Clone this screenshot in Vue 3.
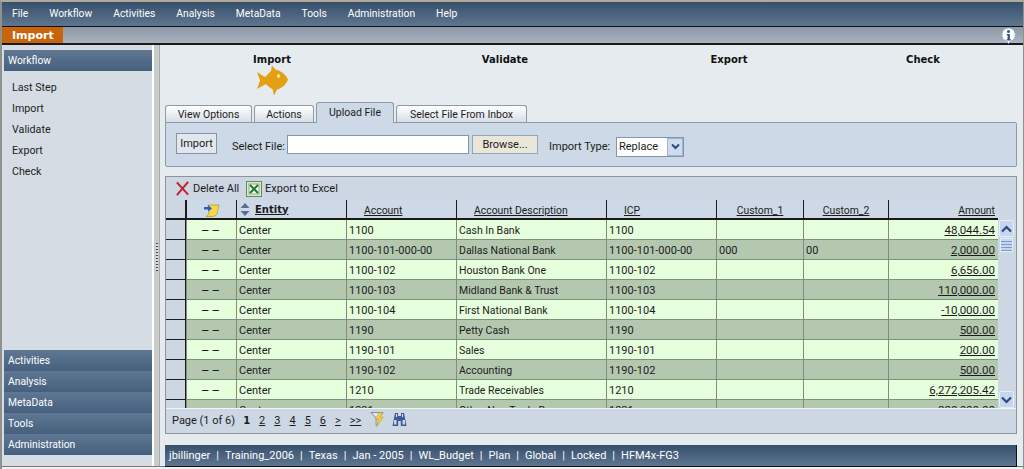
<script setup>
const menus = ['File','Workflow','Activities','Analysis','MetaData','Tools','Administration','Help']
const steps = ['Import','Validate','Export','Check']
const flowItems = ['Last Step','Import','Validate','Export','Check']
const bottomNav = ['Activities','Analysis','MetaData','Tools','Administration']
const tabs = ['View Options','Actions','Upload File','Select File From Inbox']
const headers = ['Account','Account Description','ICP','Custom_1','Custom_2']
const rows = [
  ['1100','Cash In Bank','1100','','','48,044.54'],
  ['1100-101-000-00','Dallas National Bank','1100-101-000-00','000','00','2,000.00'],
  ['1100-102','Houston Bank One','1100-102','','','6,656.00'],
  ['1100-103','Midland Bank & Trust','1100-103','','','110,000.00'],
  ['1100-104','First National Bank','1100-104','','','-10,000.00'],
  ['1190','Petty Cash','1190','','','500.00'],
  ['1190-101','Sales','1190-101','','','200.00'],
  ['1190-102','Accounting','1190-102','','','500.00'],
  ['1210','Trade Receivables','1210','','','6,272,205.42'],
  ['1221','Other Non-Trade Rec','1221','','','220,000.00']
]
const pages = ['2','3','4','5','6','>','>>']
const status = ['jbillinger','Training_2006','Texas','Jan - 2005','WL_Budget','Plan','Global','Locked','HFM4x-FG3']
</script>

<template>
  <div class="app">
    <nav class="menubar">
      <span v-for="m in menus" :key="m" class="menu">{{ m }}</span>
    </nav>
    <div class="modulebar">
      <span class="module">Import</span>
      <svg class="info" width="17" height="17" viewBox="0 0 17 17">
        <path d="M8.5 1a6.8 6.8 0 0 1 2.2 13.2L8.5 16.5l-2-2.3A6.8 6.8 0 0 1 8.5 1z" fill="#fff" stroke="#9fb2c8"/>
        <circle cx="8.5" cy="4.6" r="1.5" fill="#2f4f86"/>
        <path d="M6.8 7h3v5.2h1v1.2H6.6v-1.2h1V8.2h-.8z" fill="#2f4f86"/>
      </svg>
    </div>
    <div class="body">
      <aside class="sidebar">
        <div class="sidehead">Workflow</div>
        <ul class="flow">
          <li v-for="f in flowItems" :key="f">{{ f }}</li>
        </ul>
        <div class="sidenav">
          <div v-for="b in bottomNav" :key="b" class="sidehead">{{ b }}</div>
        </div>
      </aside>
      <div class="splitter"><span class="grip"></span></div>
      <main class="content">
        <div class="steps">
          <div v-for="(s, i) in steps" :key="s" class="step">
            <b>{{ s }}</b>
            <svg v-if="i === 0" class="fish" width="31" height="31" viewBox="0 0 31 31">
              <path d="M0 7l8 5 5-5 1-1 1-5.500 3.500 4c5 1 10 4.500 12.500 10-2 5.500-6.500 9-11 10l-3 6-1.500-6.500c-2-.5-5-3-6.500-5L0 24l3-8.500z" fill="#e2a012"/>
              <circle cx="21.500" cy="11" r="1.700" fill="#fbeeb8"/>
            </svg>
          </div>
        </div>
        <div class="tabs">
          <span v-for="t in tabs" :key="t" class="tab" :class="{ active: t === 'Upload File' }">{{ t }}</span>
        </div>
        <section class="upload">
          <button class="importbtn">Import</button>
          <label class="filelabel">Select File:</label>
          <span class="fileinput"></span>
          <span class="browse">Browse...</span>
          <label class="typelabel">Import Type:</label>
          <span class="select">
            <span class="seltext">Replace</span>
            <span class="selbtn">
              <svg width="9" height="7" viewBox="0 0 9 7"><path d="M1 1.500l3.500 3.500L8 1.500" fill="none" stroke="#2c4a7c" stroke-width="2"/></svg>
            </span>
          </span>
        </section>
        <section class="grid-panel">
          <div class="toolbar">
            <svg width="15" height="15" viewBox="0 0 16 16"><path d="M2 1.500l12 13M14 1l-12 14" stroke="#c8202c" stroke-width="2.200" fill="none"/></svg>
            <span class="tool-text">Delete All</span>
            <svg class="xls" width="16" height="16" viewBox="0 0 16 16">
              <rect x=".5" y=".5" width="15" height="15" fill="#dfe8cf" stroke="#5f8f56"/>
              <rect x="3" y="3" width="10" height="10" fill="#fff" stroke="#8aa880"/>
              <path d="M4 4l8 8M12 4l-8 8" stroke="#1f7a34" stroke-width="2.200"/>
            </svg>
            <span class="tool-text">Export to Excel</span>
          </div>
          <div class="gridbox">
            <div class="gridclip">
              <div class="row head">
                <span class="cell rownum"></span>
                <span class="cell iconcell">
                  <svg width="17" height="14" viewBox="0 0 17 14">
                    <path d="M5 2h11l-2 9c-1 2-3 2.500-6 2.500H3c2-1 3-3 3-5z" fill="#f5d84a" stroke="#9d8a2a" stroke-width=".6"/>
                    <path d="M1 4h4V2l4 3.500-4 3V6.500H1z" fill="#2a5cc4"/>
                  </svg>
                </span>
                <span class="cell entityhead">
                  <svg width="10" height="13" viewBox="0 0 10 13"><path d="M5 0l4.500 5h-9zM5 13L.5 8h9z" fill="#5a6f92"/></svg>
                  <b>Entity</b>
                </span>
                <span v-for="h in headers" :key="h" class="cell headcell" :class="{ left: h.startsWith('Acc') || h === 'ICP' }">{{ h }}</span>
                <span class="cell headcell amt">Amount</span>
              </div>
              <div v-for="(r, i) in rows" :key="i" class="row data" :class="i % 2 ? 'dark' : 'light'">
                <span class="cell rownum"></span>
                <span class="cell dash">––</span>
                <span class="cell">Center</span>
                <span class="cell">{{ r[0] }}</span>
                <span class="cell desc">{{ r[1] }}</span>
                <span class="cell">{{ r[2] }}</span>
                <span class="cell">{{ r[3] }}</span>
                <span class="cell">{{ r[4] }}</span>
                <span class="cell amt"><u>{{ r[5] }}</u></span>
              </div>
            </div>
            <div class="scroll">
              <span class="arrow"><svg width="11" height="8" viewBox="0 0 11 8"><path d="M1 6.500l4.500-4.500L10 6.500" fill="none" stroke="#2c4a7c" stroke-width="2.200"/></svg></span>
              <span class="thumb"></span>
              <span class="track"></span>
              <span class="arrow"><svg width="11" height="8" viewBox="0 0 11 8"><path d="M1 1.500L5.500 6 10 1.500" fill="none" stroke="#2c4a7c" stroke-width="2.200"/></svg></span>
            </div>
          </div>
          <div class="pager">
            <span>Page (1 of 6)</span>
            <b class="cur">1</b>
            <u v-for="p in pages" :key="p" class="pg">{{ p }}</u>
            <svg class="pgicon" width="15" height="17" viewBox="0 0 16 17">
              <path d="M1 1h13L9 7v6L6.500 15V7z" fill="#dfe6ee" stroke="#7d8a9a"/>
              <path d="M10 1L6 8h3l-2 8 7-10h-3l2-5z" fill="#f3d33c" stroke="#b79a1e" stroke-width=".6"/>
            </svg>
            <svg class="pgicon2" width="15" height="15" viewBox="0 0 15 15">
              <path d="M3 1h3v3h3V1h3l2.500 13H8.800V9H6.200v5H.5z" fill="#3f5c90"/>
              <rect x="4" y="2" width="1" height="3" fill="#dbe6f5"/>
              <rect x="10" y="2" width="1" height="3" fill="#dbe6f5"/>
              <rect x="2" y="8" width="2.500" height="4.500" fill="#c4d4ea"/>
              <rect x="10.500" y="8" width="2.500" height="4.500" fill="#c4d4ea"/>
            </svg>
          </div>
        </section>
        <footer class="statusbar">
          <template v-for="(s, i) in status" :key="s">
            <span v-if="i" class="sep">|</span>
            <span>{{ s }}</span>
          </template>
        </footer>
      </main>
    </div>
  </div>
</template>

<style>
html, body { margin: 0; padding: 0; background: #f3f4f2; }
</style>

<style scoped>
.app {
  width: 1024px; height: 469px; box-sizing: border-box; overflow: hidden;
  display: flex; flex-direction: column;
  font: 11px/14px Roboto, "Noto Sans", sans-serif;
  color: #1c1c1c; background: #f1f2f0;
  border-top: 2px solid #b0aa98; border-left: 2px solid #8f918c;
  border-right: 1px solid #8f918c;
}
.menubar {
  height: 25px; flex: none; box-sizing: border-box; display: flex; align-items: center; padding-left: 10px; gap: 21px;
  background: linear-gradient(#36506c, #5f7690); color: #fff; font-size: 10.3px;
  border-bottom: 1px solid #111;
}
.modulebar {
  height: 18px; flex: none; box-sizing: border-box; display: flex; align-items: stretch; justify-content: space-between;
  background: linear-gradient(#8d97a5, #aab3c0);
  border-bottom: 2px solid #1a1a1a;
}
.module {
  width: 61px; box-sizing: border-box; background: #c8640c; color: #fff; font-weight: 700;
  font-family: "DejaVu Sans", sans-serif; font-size: 11px; padding-left: 10px; line-height: 17px;
}
.info { margin: 0 6px 0 0; align-self: center; }
.body { height: 422px; flex: none; display: flex; min-height: 0; border-bottom: 1px solid #777; box-sizing: border-box; }
.sidebar {
  width: 148px; flex: none; box-sizing: content-box; display: flex; flex-direction: column;
  background: #d6dce4; padding: 5px 0 11px 2px; border-right: 2px solid #fff;
  background-clip: padding-box;
}
.sidehead {
  height: 21px; line-height: 22px; padding-left: 4px; color: #fff; font-size: 10.3px;
  background: linear-gradient(#5f7792, #45607e);
}
.flow { list-style: none; margin: 0; padding: 6px 0 0 8px; font-size: 10.7px; }
.flow li { height: 21px; line-height: 21px; }
.sidenav { margin-top: auto; }
.splitter { width: 5px; flex: none; background: #c8ccc9; display: flex; align-items: center; justify-content: center; }
.grip { width: 2px; height: 28px; margin-top: 3px; background: repeating-linear-gradient(#444 0 1px, #ddd 1px 3px); }
.content {
  flex: 1; min-width: 0; background: #e6ebef; border-left: 1px solid #a9adac;
  display: flex; flex-direction: column; padding: 0 6px 0 5px; position: relative;
}
.steps {
  height: 57px; flex: none; margin: 0 -6px 0 -5px; display: grid;
  grid-template-columns: 224px 242px 206px 182px; padding-top: 8px; box-sizing: border-box;
}
.step { display: flex; flex-direction: column; align-items: center; }
.step b { font: 700 10px/13px "DejaVu Sans", sans-serif; color: #111; }
.fish { margin-top: -1px; }
.tabs { display: flex; gap: 2px; height: 20px; flex: none; align-items: flex-end; font-size: 10.5px; }
.tab {
  height: 18px; line-height: 18px; box-sizing: border-box; text-align: center;
  background: linear-gradient(#fff, #d5dce6); border: 1px solid #8f9aa7; border-bottom: 0;
  border-radius: 3px 3px 0 0; margin-bottom: -1px; position: relative;
}
.tab:nth-child(1) { width: 87px; }
.tab:nth-child(2) { width: 60px; }
.tab:nth-child(3) { width: 78px; height: 21px; background: #cdd9e6; line-height: 20px; z-index: 1; }
.tab:nth-child(4) { width: 131px; }
.upload {
  height: 45px; flex: none; box-sizing: border-box; display: flex; align-items: center;
  background: #cdd9e6; border: 1px solid #8f9aa7; border-radius: 2px; padding: 0 0 0 10px; position: relative;
}
.importbtn {
  width: 41px; height: 21px; margin: -2px 0 0; padding: 0; box-sizing: border-box;
  font: inherit; color: inherit; background: #e2e7ee; border: 1px solid #7f95b2;
}
.filelabel { width: 51px; margin: 4px 0 0 15px; white-space: nowrap; }
.fileinput { width: 182px; height: 19px; box-sizing: border-box; margin: -1px 0 0 4px; background: #fff; border: 1px solid #7f95b2; }
.browse {
  width: 66px; height: 19px; box-sizing: border-box; margin: -1px 0 0 3px; background: #ebe7d8;
  border: 1px solid #8fa4bd; text-align: center; line-height: 17px;
}
.typelabel { width: 62px; margin: 4px 0 0 11px; white-space: nowrap; }
.select {
  width: 68px; height: 20px; box-sizing: border-box; margin: 4px 0 0 5px; background: #fff;
  border: 1px solid #7f95b2; display: flex; justify-content: space-between; align-items: stretch;
}
.seltext { padding-left: 2px; line-height: 18px; }
.selbtn { width: 16px; background: #cfdcef; border: 1px solid #9fb4d2; display: flex; align-items: center; justify-content: center; box-sizing: border-box; }
.grid-panel {
  margin-top: 9px; height: 258px; flex: none; box-sizing: border-box; background: #cdd6e3;
  border: 1px solid #8e949a; display: flex; flex-direction: column;
}
.toolbar { height: 23px; flex: none; display: flex; align-items: center; padding-left: 9px; }
.tool-text { margin-left: 3px; }
.tool-text:first-of-type { width: 46px; white-space: nowrap; margin-left: 3px; }
.xls { margin-left: 7px; }
.gridbox { height: 208px; flex: none; display: flex; }
.gridclip { width: 832px; overflow: hidden; }
.row {
  display: grid; height: 20px; box-sizing: border-box;
  grid-template-columns: 20px 50px 110px 110px 150px 110px 87px 85px 110px;
}
.cell {
  border-left: 1px solid #7f8f7d; border-bottom: 1px solid #7f8f7d; padding: 1px 2px 0;
  line-height: 19px; white-space: nowrap; overflow: hidden; box-sizing: border-box;
}
.desc { font-size: 10.5px; }
.row.head { background: #cdd9e6; }
.row.head .cell { border-left: 1px solid #1a1a1a; border-bottom: 2px solid #1a1a1a; line-height: 19px; padding-top: 1px; }
.row.head .rownum { border-left: 0; border-right: 1px solid #1a1a1a; }
.iconcell { display: flex; align-items: center; justify-content: center; }
.entityhead { display: flex; align-items: center; gap: 5px; padding-left: 3px; }
.entityhead b { font: 700 10px/14px "DejaVu Sans", sans-serif; text-decoration: underline; }
.amt { text-align: right; padding-right: 3px; font-size: 11.5px; }
.headcell { text-align: center; text-decoration: underline; font-size: 10.4px; }
.headcell.left { text-align: left; padding-left: 17px; }
.headcell.amt { text-align: right; padding-right: 3px; font-size: 10.4px; }
.rownum { background: #cdd6e3; border-left: 0 !important; border-right: 1px solid #1a1a1a; border-bottom-color: #1a1a1a !important; }
.light { background: #e6ffdc; }
.dark { background: #b4c8b0; }
.dash { text-align: center; font-size: 13px; letter-spacing: 2px; }
.scroll { flex: 1; display: flex; flex-direction: column; align-items: center; padding: 20px 0 0 0; margin-left: -1px; }
.arrow {
  width: 15px; height: 17px; flex: none; background: #c6d6ee; border: 1px solid #e4edf8; box-sizing: border-box;
  display: flex; align-items: center; justify-content: center; border-radius: 2px;
}
.thumb {
  width: 13px; height: 14px; flex: none; margin-top: 1px;
  background: repeating-linear-gradient(#c6d6ee 0 2px, #7f9ac4 2px 3px); border: 1px solid #e4edf8; box-sizing: border-box;
}
.track { flex: 1; }
.pager {
  height: 25px; flex: 1; display: flex; align-items: center; padding-left: 6px; background: #cdd6e3;
  border-top: 1px solid #f2f5f8; box-sizing: border-box;
}
.cur { font: 700 10px/14px "DejaVu Sans", sans-serif; margin-left: 8px; }
.pg { margin-left: 9px; }
.pgicon { margin: -4px 0 0 9px; }
.pgicon2 { margin: -4px 0 0 7px; }
.statusbar {
  margin-top: 11px; height: 22px; flex: none; box-sizing: border-box; display: flex; align-items: center;
  padding-left: 4px; gap: 6px; color: #fff; background: linear-gradient(#36506c, #5f7690);
  border-right: 1px solid #111; border-bottom: 1px solid #111;
}
</style>
